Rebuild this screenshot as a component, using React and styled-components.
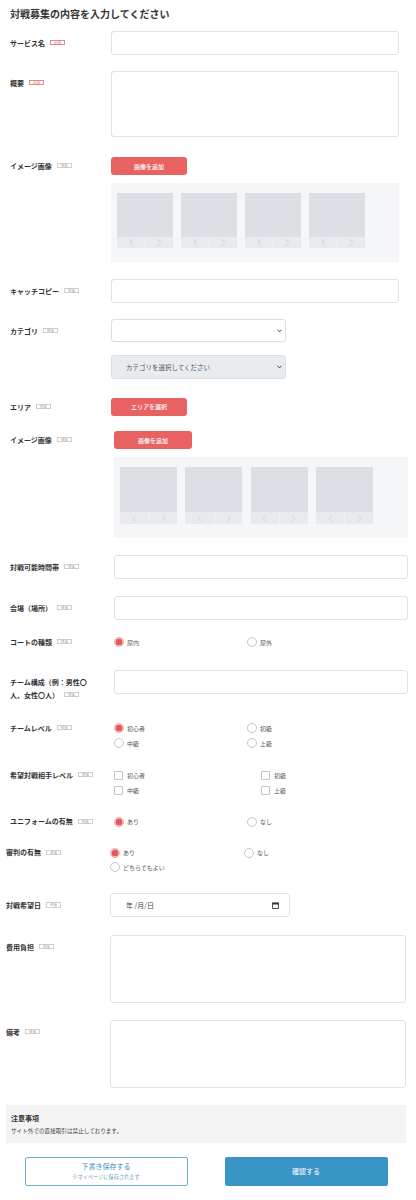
import React from 'react';
import styled, { createGlobalStyle } from 'styled-components';

const Global = createGlobalStyle`
  html, body { margin: 0; padding: 0; background: #fff; }
  body { font-family: "Noto Sans CJK JP", "Noto Sans", sans-serif; color: #333; }
  * { box-sizing: border-box; }
`;

const Page = styled.div`
  width: 416px;
  padding-bottom: 14px;
`;

const Title = styled.h1`
  margin: 0;
  padding: 6.5px 0 0 10px;
  font-size: 10px;
  line-height: 13px;
  font-weight: 700;
  color: #333;
`;

const Section = styled.div`
  padding: 0 ${(p) => p.$pr}px 0 ${(p) => p.$pl}px;
`;

const Row = styled.div`
  display: grid;
  grid-template-columns: ${(p) => p.$lw}px 1fr;
  align-items: start;
  margin-top: ${(p) => p.$mt}px;
`;

const Label = styled.div`
  padding-top: ${(p) => p.$pt}px;
  font-size: 7px;
  line-height: 13px;
  font-weight: 700;
  color: #333;
  white-space: nowrap;
`;

const Badge = styled.span`
  display: inline-block;
  vertical-align: middle;
  margin-left: 5px;
  margin-top: -2px;
  width: 15px;
  height: 5.5px;
  border: 1px solid ${(p) => (p.$req ? '#e58a8a' : '#cfcfcf')};
  color: ${(p) => (p.$req ? '#e06464' : '#a0a0a0')};
  font-size: 3.5px;
  line-height: 3.5px;
  font-weight: 400;
  text-align: center;
  background: #fff;
`;

const Field = styled.div`
  display: flex;
  flex-direction: column;
  align-items: flex-start;
  gap: ${(p) => p.$gap || 0}px;
`;

const TextInput = styled.input`
  display: block;
  width: 100%;
  height: ${(p) => p.$h || 24}px;
  margin: 0;
  border: 1px solid #e2e2e2;
  border-radius: 3px;
  background: #fff;
  outline: none;
`;

const TextArea = styled.textarea`
  display: block;
  width: 100%;
  height: ${(p) => p.$h}px;
  margin: 0;
  border: 1px solid #e2e2e2;
  border-radius: 3px;
  background: #fff;
  resize: none;
  outline: none;
`;

const RedButton = styled.button`
  width: ${(p) => p.$w}px;
  height: ${(p) => p.$h}px;
  border: none;
  border-radius: 3px;
  background: #e96262;
  color: #fff;
  font-family: inherit;
  font-size: 6px;
  font-weight: 500;
  padding: 0;
  cursor: pointer;
`;

const Gallery = styled.div`
  width: 100%;
  background: #f5f6f8;
  padding: 10px 6px 14px;
  display: flex;
  gap: ${(p) => p.$gap}px;
`;

const Thumb = styled.div`
  width: ${(p) => p.$w}px;
  display: flex;
  flex-direction: column;
`;

const ThumbImage = styled.div`
  height: ${(p) => p.$h}px;
  background: #dcdfe4;
`;

const ThumbNav = styled.div`
  height: ${(p) => p.$h}px;
  display: grid;
  grid-template-columns: 1fr 1fr;
  background: #e8eaed;
`;

const NavHalf = styled.div`
  display: flex;
  align-items: center;
  justify-content: center;
  border-left: ${(p) => (p.$right ? '1px solid #f2f3f5' : 'none')};
`;

const SelectWrap = styled.div`
  position: relative;
  width: ${(p) => p.$w}px;
  height: ${(p) => p.$h}px;
`;

const Select = styled.select`
  appearance: none;
  -webkit-appearance: none;
  display: block;
  width: 100%;
  height: 100%;
  margin: 0;
  border: 1px solid #dedede;
  border-radius: 3px;
  background: ${(p) => (p.$filled ? '#e9ecef' : '#fff')};
  padding: 0 0 0 14px;
  font-family: inherit;
  font-size: 6.5px;
  color: #555;
  outline: none;
`;

const Chevron = styled.svg`
  position: absolute;
  right: 4px;
  top: 50%;
  margin-top: -2px;
  pointer-events: none;
`;

const OptionGrid = styled.div`
  display: grid;
  grid-template-columns: ${(p) => p.$col}px ${(p) => p.$col}px;
  row-gap: ${(p) => p.$gap || 2}px;
`;

const Option = styled.label`
  display: flex;
  align-items: center;
  gap: 3px;
  height: 13px;
  font-size: 6px;
  color: #555;
  white-space: nowrap;
`;

const RadioDot = styled.span`
  display: inline-block;
  width: 10px;
  height: 10px;
  border-radius: 50%;
  border: 1px solid ${(p) => (p.$on ? '#f0b3b3' : '#c6c6c6')};
  background: ${(p) => (p.$on ? '#e35a5a' : '#fff')};
  box-shadow: ${(p) => (p.$on ? 'inset 0 0 0 0.5px #fff' : 'none')};
  flex-shrink: 0;
`;

const CheckBox = styled.span`
  display: inline-block;
  width: 9px;
  height: 9px;
  border: 1px solid #c6c6c6;
  border-radius: 1px;
  background: #fff;
  flex-shrink: 0;
  margin-right: 1px;
`;

const DateBox = styled.div`
  width: 180px;
  height: 24.5px;
  border: 1px solid #e2e2e2;
  border-radius: 3px;
  background: #fff;
  display: flex;
  align-items: center;
  justify-content: space-between;
  padding: 0 10px 0 15px;
  font-size: 7px;
  color: #444;
`;

const Notice = styled.div`
  margin-top: 17px;
  background: #f4f4f4;
  padding: 7.5px 5px 4.5px;
`;

const NoticeTitle = styled.div`
  font-size: 7px;
  line-height: 13px;
  font-weight: 700;
  color: #333;
`;

const NoticeText = styled.div`
  font-size: 5.6px;
  line-height: 13px;
  color: #444;
`;

const ButtonRow = styled.div`
  margin-top: 14px;
  display: flex;
  justify-content: center;
  gap: 37px;
`;

const DraftButton = styled.button`
  width: 163px;
  height: 29px;
  border: 1px solid #6eb0c9;
  border-radius: 2px;
  background: #fff;
  font-family: inherit;
  display: flex;
  flex-direction: column;
  align-items: center;
  justify-content: center;
  padding: 0;
`;

const DraftMain = styled.span`
  font-size: 7px;
  line-height: 11px;
  color: #3d8fbf;
`;

const DraftSub = styled.span`
  font-size: 5.2px;
  line-height: 9px;
  color: #6c9fbe;
`;

const ConfirmButton = styled.button`
  width: 163px;
  height: 29px;
  border: none;
  border-radius: 2px;
  background: #3a95c7;
  color: #fff;
  font-family: inherit;
  font-size: 7px;
  padding: 0;
`;

const Arrow = ({ dir }) => (
  <svg width="5" height="7" viewBox="0 0 5 7">
    <polyline
      points={dir === 'l' ? '4,0.5 1,3.5 4,6.5' : '1,0.5 4,3.5 1,6.5'}
      fill="none"
      stroke="#c4c8cd"
      strokeWidth="0.7"
    />
  </svg>
);

const ImageGallery = ({ w, imgH, navH, gap }) => (
  <Gallery $gap={gap}>
    {[0, 1, 2, 3].map((i) => (
      <Thumb key={i} $w={w}>
        <ThumbImage $h={imgH} />
        <ThumbNav $h={navH}>
          <NavHalf>
            <Arrow dir="l" />
          </NavHalf>
          <NavHalf $right>
            <Arrow dir="r" />
          </NavHalf>
        </ThumbNav>
      </Thumb>
    ))}
  </Gallery>
);

const DownChevron = () => (
  <Chevron width="5" height="4" viewBox="0 0 5 4">
    <polyline points="0.6,0.8 2.5,2.9 4.4,0.8" fill="none" stroke="#444" strokeWidth="1" />
  </Chevron>
);

const Req = () => <Badge $req>必須</Badge>;
const Opt = () => <Badge>任意</Badge>;

const Radios = ({ col, items, checked, gap }) => (
  <OptionGrid $col={col} $gap={gap}>
    {items.map((t) => (
      <Option key={t}>
        <RadioDot $on={t === checked} />
        {t}
      </Option>
    ))}
  </OptionGrid>
);

const Checks = ({ col, items }) => (
  <OptionGrid $col={col}>
    {items.map((t) => (
      <Option key={t}>
        <CheckBox />
        {t}
      </Option>
    ))}
  </OptionGrid>
);

export default function App() {
  return (
    <Page>
      <Global />
      <Title>対戦募集の内容を入力してください</Title>

      <Section $pl={10} $pr={17}>
        <Row $lw={101} $mt={11.5}>
          <Label $pt={5.5}>サービス名<Req /></Label>
          <TextInput />
        </Row>
        <Row $lw={101} $mt={16}>
          <Label $pt={5.5}>概要<Req /></Label>
          <TextArea $h={66} />
        </Row>
        <Row $lw={101} $mt={20}>
          <Label $pt={2.5}>イメージ画像<Opt /></Label>
          <Field $gap={8}>
            <RedButton $w={76} $h={18}>画像を追加</RedButton>
            <ImageGallery w={56} imgH={44} navH={11} gap={8} />
          </Field>
        </Row>
        <Row $lw={101} $mt={17}>
          <Label $pt={5.5}>キャッチコピー<Opt /></Label>
          <TextInput />
        </Row>
        <Row $lw={101} $mt={16}>
          <Label $pt={5.5}>カテゴリ<Opt /></Label>
          <Field $gap={13}>
            <SelectWrap $w={175} $h={23}>
              <Select defaultValue="">
                <option value=""></option>
              </Select>
              <DownChevron />
            </SelectWrap>
            <SelectWrap $w={175} $h={24}>
              <Select $filled defaultValue="">
                <option value="">カテゴリを選択してください</option>
              </Select>
              <DownChevron />
            </SelectWrap>
          </Field>
        </Row>
        <Row $lw={101} $mt={19}>
          <Label $pt={2.5}>エリア<Opt /></Label>
          <Field>
            <RedButton $w={76} $h={17.5}>エリアを選択</RedButton>
          </Field>
        </Row>
      </Section>

      <Section $pl={10} $pr={8}>
        <Row $lw={104} $mt={15.5}>
          <Label $pt={2.5}>イメージ画像<Opt /></Label>
          <Field $gap={8}>
            <RedButton $w={78} $h={18}>画像を追加</RedButton>
            <ImageGallery w={57} imgH={45} navH={12} gap={8.3} />
          </Field>
        </Row>
        <Row $lw={104} $mt={17}>
          <Label $pt={5.5}>対戦可能時間帯<Opt /></Label>
          <TextInput />
        </Row>
        <Row $lw={104} $mt={17}>
          <Label $pt={5.5}>会場（場所）<Opt /></Label>
          <TextInput />
        </Row>
        <Row $lw={104} $mt={15.5}>
          <Label $pt={0}>コートの種類<Opt /></Label>
          <Radios col={133} items={['屋内', '屋外']} checked="屋内" />
        </Row>
        <Row $lw={104} $mt={21.5}>
          <Label $pt={5.5}>
            チーム構成（例：男性〇
            <br />
            人、女性〇人）<Opt />
          </Label>
          <TextInput />
        </Row>
        <Row $lw={104} $mt={20}>
          <Label $pt={0}>チームレベル<Opt /></Label>
          <Radios col={133} items={['初心者', '初級', '中級', '上級']} checked="初心者" />
        </Row>
        <Row $lw={104} $mt={19}>
          <Label $pt={0}>希望対戦相手レベル<Opt /></Label>
          <Checks col={147} items={['初心者', '初級', '中級', '上級']} />
        </Row>
        <Row $lw={104} $mt={18.7}>
          <Label $pt={0}>ユニフォームの有無<Opt /></Label>
          <Radios col={133} items={['あり', 'なし']} checked="あり" />
        </Row>
      </Section>

      <Section $pl={6} $pr={10}>
        <Row $lw={104} $mt={18}>
          <Label $pt={0}>審判の有無<Opt /></Label>
          <Radios col={134} gap={1.6} items={['あり', 'なし', 'どちらでもよい']} checked="あり" />
        </Row>
        <Row $lw={104} $mt={19}>
          <Label $pt={6}>対戦希望日<Opt /></Label>
          <DateBox>
            <span>年 /月/日</span>
            <svg width="7" height="7" viewBox="0 0 7 7">
              <rect x="0.6" y="0.9" width="5.8" height="5.5" fill="none" stroke="#333" strokeWidth="0.9" />
              <rect x="0.6" y="0.9" width="5.8" height="1.6" fill="#333" />
            </svg>
          </DateBox>
        </Row>
        <Row $lw={104} $mt={17.3}>
          <Label $pt={6}>費用負担<Opt /></Label>
          <TextArea $h={68} />
        </Row>
        <Row $lw={104} $mt={17}>
          <Label $pt={6}>備考<Opt /></Label>
          <TextArea $h={68} />
        </Row>
        <Notice>
          <NoticeTitle>注意事項</NoticeTitle>
          <NoticeText>サイト外での直接取引は禁止しております。</NoticeText>
        </Notice>
        <ButtonRow>
          <DraftButton>
            <DraftMain>下書き保存する</DraftMain>
            <DraftSub>※マイページに保存されます</DraftSub>
          </DraftButton>
          <ConfirmButton>確認する</ConfirmButton>
        </ButtonRow>
      </Section>
    </Page>
  );
}
